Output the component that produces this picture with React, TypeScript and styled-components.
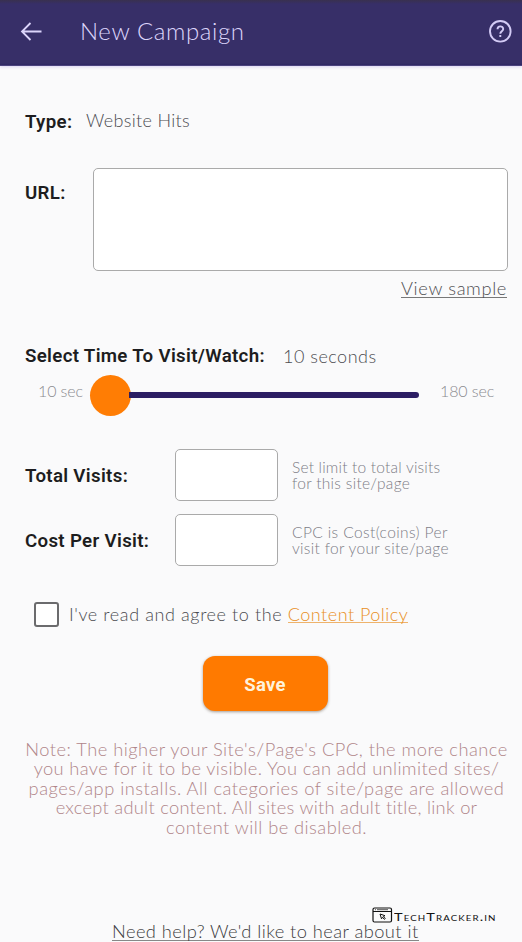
import React from 'react';
import styled, { createGlobalStyle } from 'styled-components';

const GlobalStyle = createGlobalStyle`
  * { box-sizing: border-box; }
  body {
    margin: 0;
    background: #fafafb;
    font-family: Lato, sans-serif;
    font-weight: 300;
    color: #555;
  }
`;

const Screen = styled.div`
  position: relative;
  display: flex;
  flex-direction: column;
  width: 522px;
  height: 942px;
  overflow: hidden;
  background: #fafafb;
`;

const TopBar = styled.header`
  display: flex;
  align-items: center;
  flex: none;
  height: 66px;
  padding: 0 10px 4px 20px;
  background: linear-gradient(#39314f 0, #372f68 4px, #372f68 63px, #2f2663 65px, #69629b 66px);
  box-shadow: 0 1px 3px #dcd4f4;
`;

const Title = styled.h1`
  flex: 1;
  margin: 0 0 1px 38px;
  font-size: 24px;
  font-weight: 300;
  letter-spacing: 0.6px;
  color: #dcd5fb;
`;

const Form = styled.main`
  display: flex;
  flex-direction: column;
  flex: 1;
  padding: 36px 14px 0 25px;
`;

const Row = styled.div<{ $height: number; $top?: number }>`
  display: flex;
  align-items: center;
  flex: none;
  height: ${(p) => p.$height}px;
  margin-top: ${(p) => p.$top ?? 0}px;
`;

const Label = styled.label<{ $width: number; $drop?: number }>`
  flex: none;
  width: ${(p) => p.$width}px;
  padding-top: ${(p) => p.$drop ?? 0}px;
  font-family: Roboto, sans-serif;
  font-size: 18.7px;
  font-weight: 600;
  line-height: 22px;
  letter-spacing: 0.32px;
  white-space: nowrap;
  color: #1d1d20;
`;

const Value = styled.span<{ $spacing: number; $lift?: number }>`
  padding-bottom: ${(p) => p.$lift ?? 0}px;
  font-size: 18px;
  line-height: 22px;
  letter-spacing: ${(p) => p.$spacing}px;
  white-space: nowrap;
  color: #4c4c51;
`;

const UrlRow = styled(Row)`
  align-items: flex-start;
`;

const UrlInput = styled.textarea`
  width: 415px;
  height: 103px;
  padding: 8px;
  border: 1px solid #aaa;
  border-radius: 5px;
  background: #fff;
  resize: none;
`;

const SampleLink = styled.a`
  align-self: flex-end;
  margin: 6px 1px 1px 0;
  height: 21px;
  border-bottom: 1px solid #777;
  font-size: 18.3px;
  line-height: 22px;
  letter-spacing: 0.63px;
  white-space: nowrap;
  color: #4e4e52;
`;

const RangeEnd = styled.span<{ $width: number; $indent?: number }>`
  flex: none;
  width: ${(p) => p.$width}px;
  padding: 0 0 8px ${(p) => p.$indent ?? 0}px;
  font-size: 16px;
  line-height: 18px;
  letter-spacing: -0.1px;
  white-space: nowrap;
  color: #8b8b90;
`;

const Slider = styled.div`
  display: flex;
  align-items: center;
  flex: none;
  width: 329px;
  margin-right: 21px;
`;

const Thumb = styled.div`
  flex: none;
  width: 41px;
  height: 41px;
  border-radius: 50%;
  background: #ff7d04;
`;

const Track = styled.div`
  flex: 1;
  height: 6px;
  margin-left: -2px;
  border-radius: 0 3px 3px 0;
  background: #2b1d63;
`;

const NumberInput = styled.input`
  flex: none;
  width: 103px;
  height: 52px;
  margin-right: 14px;
  padding: 0 8px;
  border: 1px solid #aaa;
  border-radius: 5px;
  background: #fff;
`;

const Hint = styled.p`
  display: flex;
  flex-direction: column;
  margin: 0;
  font-size: 15.5px;
  line-height: 16.5px;
  white-space: nowrap;
  color: #7d7d86;
`;

const TextLine = styled.span<{ $spacing: number }>`
  letter-spacing: ${(p) => p.$spacing}px;
`;

const Checkbox = styled.button`
  flex: none;
  width: 25px;
  height: 25px;
  margin: 0 10px 0 9px;
  padding: 0;
  border: 2px solid #6b6b6d;
  border-radius: 3px;
  background: #fff;
`;

const PolicyLink = styled.a`
  display: inline-block;
  height: 20px;
  border-bottom: 1px solid #eeb36c;
  letter-spacing: 0.5px;
  color: #e98f24;
`;

const SaveButton = styled.button`
  align-self: center;
  flex: none;
  width: 125px;
  height: 55px;
  margin: 29px 0 0 -3px;
  padding: 2px 0 0;
  border: 0;
  border-radius: 12px;
  background: #ff7a00;
  box-shadow: 0 1px 3px rgba(60, 40, 20, 0.45);
  font-family: Roboto, sans-serif;
  font-size: 18.5px;
  font-weight: 700;
  letter-spacing: 0.3px;
  color: #fff3dc;
`;

const Note = styled.p`
  display: flex;
  flex-direction: column;
  align-items: center;
  margin: 29px 0 0;
  font-size: 18.3px;
  line-height: 19.4px;
  white-space: nowrap;
  color: #b08589;
`;

const HelpLink = styled.a`
  align-self: flex-start;
  margin: 83px 0 0 87px;
  height: 21px;
  border-bottom: 1px solid #888;
  font-size: 18.3px;
  line-height: 22px;
  letter-spacing: 0.43px;
  white-space: nowrap;
  color: #3c3c40;
`;

const Watermark = styled.div`
  position: absolute;
  left: 372px;
  top: 906px;
  display: flex;
  align-items: center;
  gap: 1px;
  height: 18px;
  color: #111;
`;

const WatermarkText = styled.span`
  padding-top: 2px;
  font-size: 12px;
  font-weight: 400;
  font-variant: small-caps;
  letter-spacing: 0.9px;
  white-space: nowrap;
  transform: scaleX(1.215);
  transform-origin: left;
`;

const noteLines: [string, number][] = [
  ["Note: The higher your Site's/Page's CPC, the more chance", 0.49],
  ['you have for it to be visible. You can add unlimited sites/', 0.38],
  ['pages/app installs. All categories of site/page are allowed', 0.49],
  ['except adult content. All sites with adult title, link or', 0.27],
  ['content will be disabled.', 0.45],
];

const visitsHint: [string, number][] = [
  ['Set limit to total visits', 0.2],
  ['for this site/page', 0.3],
];

const costHint: [string, number][] = [
  ['CPC is Cost(coins) Per', 0.4],
  ['visit for your site/page', 0.32],
];

const Lines = ({ lines }: { lines: [string, number][] }) => (
  <>
    {lines.map(([text, spacing]) => (
      <TextLine key={text} $spacing={spacing}>
        {text}
      </TextLine>
    ))}
  </>
);

const BackArrow = () => (
  <svg width="22" height="20" viewBox="0 0 22 20" fill="none" stroke="#dcd5fb" strokeWidth="1.8">
    <path d="M21.5 10.500H2M10.500 2L2 10.500l8.500 8.500" />
  </svg>
);

const HelpIcon = () => (
  <svg width="24" height="24" viewBox="0 0 24 24" fill="none" stroke="#d3cbf5" strokeWidth="1.9">
    <circle cx="12.300" cy="12.300" r="10.300" />
    <path d="M9.500 10.200c0-3.800 5.700-3.700 5.700-.2 0 2.200-2.900 2.300-2.900 4.800M12.300 16v2" />
  </svg>
);

const BrowserIcon = () => (
  <svg width="21" height="16" viewBox="0 0 21 16" fill="none" stroke="#111">
    <rect x="1" y="1" width="18.500" height="14" rx="1.500" strokeWidth="1.200" />
    <path d="M1 4.500h18.500" strokeWidth="1" />
    <path d="M3 2.700h1M5 2.700h11" strokeWidth=".7" />
    <path d="M8 7l5 1.700-1.700.8 2 2-1 .8-1.800-2-1 1.500z" strokeWidth="1" />
  </svg>
);

export default function App() {
  return (
    <Screen>
      <GlobalStyle />
      <TopBar>
        <BackArrow />
        <Title>New Campaign</Title>
        <HelpIcon />
      </TopBar>
      <Form>
        <Row $height={38}>
          <Label $width={61} $drop={1}>Type:</Label>
          <Value $spacing={0.33} $lift={2}>Website Hits</Value>
        </Row>
        <UrlRow $height={103} $top={28}>
          <Label $width={68} $drop={14}>URL:</Label>
          <UrlInput />
        </UrlRow>
        <SampleLink>View sample</SampleLink>
        <Row $height={30} $top={42}>
          <Label $width={258}>Select Time To Visit/Watch:</Label>
          <Value $spacing={0.5}>10 seconds</Value>
        </Row>
        <Row $height={42} $top={3}>
          <RangeEnd $width={65} $indent={13}>10 sec</RangeEnd>
          <Slider>
            <Thumb />
            <Track />
          </Slider>
          <RangeEnd $width={60}>180 sec</RangeEnd>
        </Row>
        <Row $height={52} $top={33}>
          <Label $width={150} $drop={2}>Total Visits:</Label>
          <NumberInput />
          <Hint>
            <Lines lines={visitsHint} />
          </Hint>
        </Row>
        <Row $height={52} $top={13}>
          <Label $width={150} $drop={2}>Cost Per Visit:</Label>
          <NumberInput />
          <Hint>
            <Lines lines={costHint} />
          </Hint>
        </Row>
        <Row $height={26} $top={35}>
          <Checkbox aria-label="Agree" />
          <Value $spacing={0.61}>
            I've read and agree to the <PolicyLink>Content Policy</PolicyLink>
          </Value>
        </Row>
        <SaveButton>Save</SaveButton>
        <Note>
          <Lines lines={noteLines} />
        </Note>
        <HelpLink>Need help? We'd like to hear about it</HelpLink>
      </Form>
      <Watermark>
        <BrowserIcon />
        <WatermarkText>TechTracker.in</WatermarkText>
      </Watermark>
    </Screen>
  );
}
